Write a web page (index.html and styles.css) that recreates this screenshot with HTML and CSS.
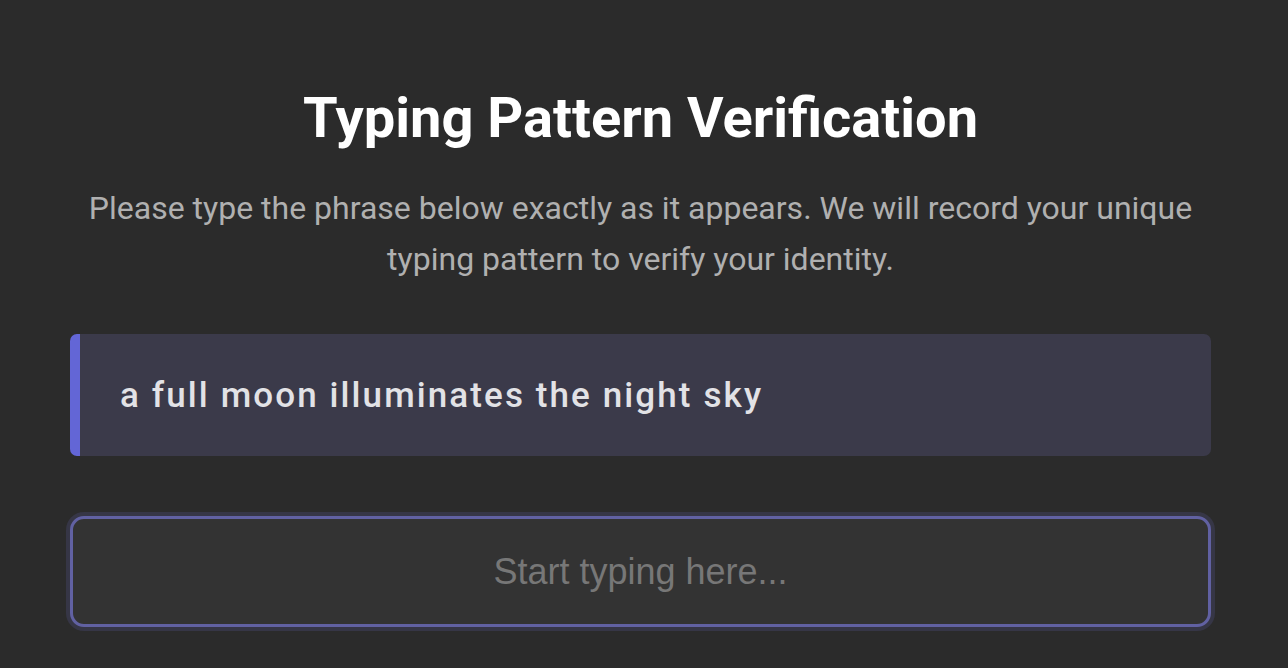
FILE: index.html
```html
<!DOCTYPE html>
<html lang="en">
<head>
<meta charset="utf-8">
<title>Typing Pattern Verification</title>
<link rel="stylesheet" href="styles.css">
</head>
<body>
<main class="container">
  <h1 class="title">Typing Pattern Verification</h1>
  <p class="subtitle">Please type the phrase below exactly as it appears. We will record your unique typing pattern to verify your identity.</p>
  <div class="phrase">a full moon illuminates the night sky</div>
  <input class="typing-input" type="text" placeholder="Start typing here...">
</main>
</body>
</html>
```
FILE: styles.css
```css
* { box-sizing: border-box; }
html, body { margin: 0; padding: 0; }
body {
  background: #2b2b2b;
  font-family: Roboto, "Noto Sans", sans-serif;
  color: #fff;
  width: 1288px;
  height: 668px;
  overflow: hidden;
}
.container {
  width: 1141px;
  margin: 0 0 0 70px;
  padding-top: 80px;
  display: flex;
  flex-direction: column;
}
.title {
  margin: 0;
  font-size: 56px;
  font-weight: 700;
  text-align: center;
  line-height: 76px;
  color: #fff;
}
.subtitle {
  margin: 27px 0 0;
  font-size: 32px;
  line-height: 51px;
  text-align: center;
  color: #b0b0b0;
}
.phrase {
  margin-top: 49px;
  height: 122px;
  display: flex;
  align-items: center;
  padding-left: 40px;
  background: #3b3a4a;
  border-left: 10px solid #6366d6;
  border-radius: 7px;
  font-size: 35px;
  font-weight: 500;
  letter-spacing: 2.1px;
  color: #e2e2e6;
}
.typing-input {
  margin-top: 60px;
  height: 111px;
  width: 100%;
  background: #333333;
  border: 3px solid #6161a2;
  border-radius: 14px;
  box-shadow: 0 0 0 4px #363646;
  font-family: "Liberation Sans", Arial, sans-serif;
  font-size: 36px;
  color: #ddd;
  text-align: center;
  outline: none;
}
.typing-input::placeholder {
  color: #777777;
}
```
